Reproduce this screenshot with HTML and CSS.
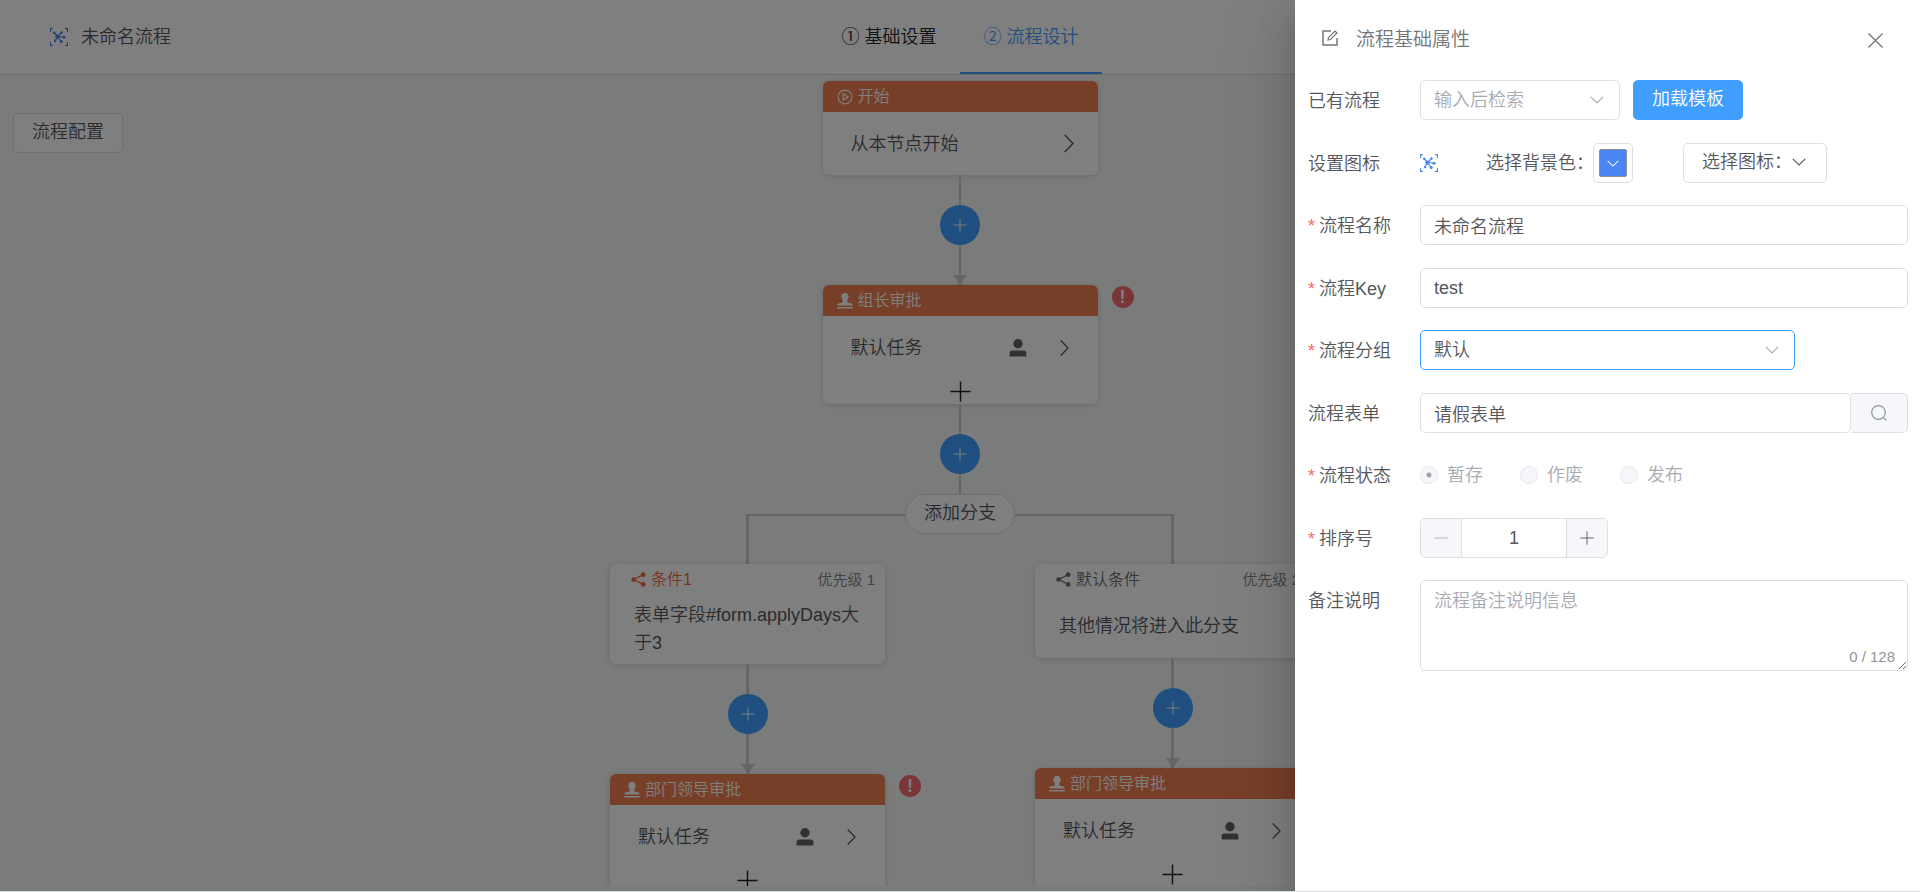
FILE: index.html
```html
<!DOCTYPE html>
<html lang="zh-CN">
<head>
  <meta charset="UTF-8">
  <meta name="viewport" content="width=device-width, initial-scale=1.0">
  <title>流程设计</title>
  <link rel="stylesheet" href="styles.css">
</head>
<body>
  <svg class="sprite" aria-hidden="true">
    <symbol id="i-flow" viewBox="0 0 18 18">
      <path d="M0 0h3L0 3zM18 0v3l-3-3zM0 18v-3l3 3zM18 18h-3l3-3z" fill="currentColor"/>
      <path d="M.5 4V.5H3M15 .5h2.500V4M17.500 14v3.500H15M3 17.500H.5V14" fill="none" stroke="currentColor"/>
      <path d="M4 4.500l3.500 4 4-4M7.500 8.500L14 9M7.500 8.500l3.500 5M7.500 8.500L5 13" fill="none" stroke="currentColor" stroke-width="1.200"/>
      <g fill="currentColor"><circle cx="4.200" cy="4.700" r="1.200"/><circle cx="11.500" cy="4.500" r="1.200"/><circle cx="14" cy="9.200" r="1.500"/><circle cx="11.200" cy="13.500" r="1.500"/><circle cx="5" cy="13" r="1.200"/><circle cx="7.500" cy="8.600" r="2.200"/></g>
    </symbol>
    <symbol id="i-play" viewBox="0 0 18 18">
      <g fill="none" stroke="currentColor" stroke-width="1.300"><circle cx="9" cy="9" r="7.800"/><path d="M7 5.500v7L12.500 9z"/></g>
    </symbol>
    <symbol id="i-stamp" viewBox="0 0 16 16">
      <path d="M8 0a3.800 3.800 0 0 1 3.600 3.900c0 1.500-1.400 2.600-1.400 4.300 0 1.300 1 1.800 2.600 1.800 1.700 0 3 .9 3 2.500H.2C.2 10.900 1.500 10 3.200 10c1.600 0 2.600-.5 2.600-1.800 0-1.700-1.400-2.800-1.400-4.300A3.800 3.800 0 0 1 8 0zM.2 14h15.600v1.500H.2z" fill="currentColor"/>
    </symbol>
    <symbol id="i-share" viewBox="0 0 16 16">
      <path d="M13 2.800L3 8l10 5.200" fill="none" stroke="currentColor" stroke-width="1.300"/>
      <g fill="currentColor"><circle cx="13" cy="2.800" r="2.500"/><circle cx="2.800" cy="8" r="2.500"/><circle cx="13" cy="13.200" r="2.500"/></g>
    </symbol>
    <symbol id="i-user" viewBox="0 0 18 18">
      <path d="M9 0a4.700 4.700 0 1 1 0 9.400A4.700 4.700 0 0 1 9 0zM.6 17.600v-3.400c0-1.600.9-2.600 2.500-2.600h11.800c1.600 0 2.500 1 2.500 2.600v3.400z" fill="currentColor"/>
    </symbol>
    <symbol id="i-right" viewBox="0 0 10 18">
      <path d="M.8.5L9 9 .8 17.500" fill="none" stroke="currentColor" stroke-width="1.400"/>
    </symbol>
    <symbol id="i-down" viewBox="0 0 14 8">
      <path d="M.8.8L7 7 13.200.8" fill="none" stroke="currentColor" stroke-width="1.200"/>
    </symbol>
    <symbol id="i-plus" viewBox="0 0 22 22">
      <path d="M11 .5v21M.5 11h21" fill="none" stroke="currentColor" stroke-width="1.500"/>
    </symbol>
    <symbol id="i-minus" viewBox="0 0 22 22">
      <path d="M.5 11h21" fill="none" stroke="currentColor" stroke-width="1.500"/>
    </symbol>
    <symbol id="i-edit" viewBox="0 0 16 16">
      <path d="M9 1H1v14h14V8" fill="none" stroke="currentColor" stroke-width="1.500"/>
      <path d="M6 10l.5-2.500 6.500-6.500 2 2-6.500 6.500z" fill="none" stroke="currentColor" stroke-width="1.200"/>
    </symbol>
    <symbol id="i-close" viewBox="0 0 16 16">
      <path d="M.5.5l15 15M15.500.5l-15 15" fill="none" stroke="currentColor" stroke-width="1.400"/>
    </symbol>
    <symbol id="i-search" viewBox="0 0 16 16">
      <circle cx="7.500" cy="7.500" r="6.800" fill="none" stroke="currentColor" stroke-width="1.200"/>
      <path d="M12.300 12.300l3 3" stroke="currentColor" stroke-width="1.200"/>
    </symbol>
  </svg>

  <div class="app">
    <header class="header">
      <div class="brand">
        <svg class="icon-flow"><use href="#i-flow"/></svg>
        <span>未命名流程</span>
      </div>
      <nav class="tabs">
        <a href="#base">① 基础设置</a>
        <a href="#design" class="active">② 流程设计</a>
      </nav>
    </header>

    <main class="canvas">
      <button class="btn config-btn">流程配置</button>

      <section class="node">
        <h3 class="node-title"><svg><use href="#i-play"/></svg>开始</h3>
        <div class="node-row">
          <span>从本节点开始</span>
          <svg class="arrow-lg"><use href="#i-right"/></svg>
        </div>
      </section>
      <div class="link link-arrow">
        <button class="add" aria-label="添加节点"><svg><use href="#i-plus"/></svg></button>
      </div>

      <section class="node">
        <h3 class="node-title"><svg><use href="#i-stamp"/></svg>组长审批</h3>
        <div class="node-row">
          <span>默认任务</span>
          <svg class="user"><use href="#i-user"/></svg>
          <svg class="arrow"><use href="#i-right"/></svg>
        </div>
        <div class="node-more"><svg><use href="#i-plus"/></svg></div>
        <span class="error">!</span>
      </section>
      <div class="link link-short">
        <button class="add" aria-label="添加节点"><svg><use href="#i-plus"/></svg></button>
      </div>

      <button class="btn branch-btn">添加分支</button>
      <div class="branches">
        <div class="branch">
          <section class="node">
            <div class="cond-title active">
              <svg><use href="#i-share"/></svg><span>条件1</span><small>优先级 1</small>
            </div>
            <p class="cond-body">表单字段#form.applyDays大于3</p>
          </section>
          <div class="link link-arrow">
            <button class="add" aria-label="添加节点"><svg><use href="#i-plus"/></svg></button>
          </div>
          <section class="node">
            <h3 class="node-title"><svg><use href="#i-stamp"/></svg>部门领导审批</h3>
            <div class="node-row">
              <span>默认任务</span>
              <svg class="user"><use href="#i-user"/></svg>
              <svg class="arrow"><use href="#i-right"/></svg>
            </div>
            <div class="node-more"><svg><use href="#i-plus"/></svg></div>
            <span class="error">!</span>
          </section>
        </div>

        <div class="branch">
          <section class="node">
            <div class="cond-title">
              <svg><use href="#i-share"/></svg><span>默认条件</span><small>优先级 2</small>
            </div>
            <p class="cond-body">其他情况将进入此分支</p>
          </section>
          <div class="link link-arrow">
            <button class="add" aria-label="添加节点"><svg><use href="#i-plus"/></svg></button>
          </div>
          <section class="node">
            <h3 class="node-title"><svg><use href="#i-stamp"/></svg>部门领导审批</h3>
            <div class="node-row">
              <span>默认任务</span>
              <svg class="user"><use href="#i-user"/></svg>
              <svg class="arrow"><use href="#i-right"/></svg>
            </div>
            <div class="node-more"><svg><use href="#i-plus"/></svg></div>
          </section>
        </div>
      </div>
    </main>

    <div class="overlay">
      <aside class="drawer">
        <header class="drawer-header">
          <svg class="edit"><use href="#i-edit"/></svg>
          <h2>流程基础属性</h2>
          <button class="close" aria-label="关闭"><svg><use href="#i-close"/></svg></button>
        </header>

        <form class="form">
          <div class="form-item">
            <label for="template">已有流程</label>
            <div class="field">
              <div class="select select-sm placeholder">
                <select id="template"><option>输入后检索</option></select>
                <svg><use href="#i-down"/></svg>
              </div>
              <button type="button" class="btn primary">加载模板</button>
            </div>
          </div>

          <div class="form-item">
            <span class="label">设置图标</span>
            <div class="field">
              <svg class="icon-flow"><use href="#i-flow"/></svg>
              <label class="color-label" for="color">选择背景色：</label>
              <button type="button" id="color" class="color" aria-label="选择背景色">
                <span class="swatch"><svg><use href="#i-down"/></svg></span>
              </button>
              <button type="button" class="btn icon-btn">选择图标：<svg><use href="#i-down"/></svg></button>
            </div>
          </div>

          <div class="form-item required">
            <label for="name">流程名称</label>
            <div class="field"><input type="text" id="name" value="未命名流程"></div>
          </div>

          <div class="form-item required">
            <label for="key">流程Key</label>
            <div class="field"><input type="text" id="key" value="test"></div>
          </div>

          <div class="form-item required">
            <label for="group">流程分组</label>
            <div class="field">
              <div class="select select-lg focus">
                <select id="group"><option>默认</option></select>
                <svg><use href="#i-down"/></svg>
              </div>
            </div>
          </div>

          <div class="form-item">
            <label for="form">流程表单</label>
            <div class="field">
              <input type="text" id="form" class="with-append" value="请假表单">
              <button type="button" class="append" aria-label="搜索"><svg><use href="#i-search"/></svg></button>
            </div>
          </div>

          <div class="form-item required">
            <span class="label">流程状态</span>
            <div class="field radios">
              <label><input type="radio" name="status" checked disabled>暂存</label>
              <label><input type="radio" name="status" disabled>作废</label>
              <label><input type="radio" name="status" disabled>发布</label>
            </div>
          </div>

          <div class="form-item required">
            <label for="sort">排序号</label>
            <div class="field">
              <div class="number">
                <button type="button" disabled aria-label="减少"><svg><use href="#i-minus"/></svg></button>
                <input type="text" id="sort" value="1">
                <button type="button" aria-label="增加"><svg><use href="#i-plus"/></svg></button>
              </div>
            </div>
          </div>

          <div class="form-item">
            <label for="remark">备注说明</label>
            <div class="field remark">
              <textarea id="remark" placeholder="流程备注说明信息" maxlength="128"></textarea>
              <span class="count">0 / 128</span>
            </div>
          </div>
        </form>
      </aside>
    </div>
  </div>
  <div class="bottom-line"></div>
</body>
</html>
```

FILE: styles.css
```css
* {
  box-sizing: border-box;
}

body {
  margin: 0;
  height: 100vh;
  display: flex;
  flex-direction: column;
  overflow: hidden;
  font-family: "Liberation Sans", "Noto Sans CJK SC", sans-serif;
  font-size: 18px;
  font-weight: 350;
  line-height: 28px;
  color: #55575b;
}

button, input, select, textarea {
  font: inherit;
  color: inherit;
}

button {
  padding: 0;
  cursor: pointer;
}

svg {
  display: block;
  flex: none;
}

h2, h3, p {
  margin: 0;
  font-weight: inherit;
}

.sprite {
  position: absolute;
  width: 0;
  height: 0;
}

.app {
  position: relative;
  flex: 1;
  min-height: 0;
  display: flex;
  flex-direction: column;
  background: #f5f8f6;
}

.bottom-line {
  height: 1px;
  background: #d3dde2;
}

/* header */
.header {
  display: grid;
  grid-template-columns: 1fr auto 1fr;
  flex: none;
  height: 75px;
  background: #fff;
  border-bottom: 1px solid #dcdcdc;
}

.brand {
  display: flex;
  align-items: center;
  gap: 13px;
  padding-left: 50px;
}

.icon-flow {
  width: 18px;
  height: 18px;
  color: #4a86f0;
}

.tabs {
  display: flex;
}

.tabs a {
  width: 142px;
  height: 74px;
  line-height: 74px;
  text-align: center;
  color: #222;
  text-decoration: none;
  border-bottom: 2px solid transparent;
}

.tabs a.active {
  color: #409eff;
  border-color: #409eff;
}

/* canvas */
.canvas {
  position: relative;
  flex: 1;
  min-height: 0;
  margin-bottom: 5px;
  padding-top: 6px;
  overflow: hidden;
  display: flex;
  flex-direction: column;
  align-items: center;
}

.canvas > * {
  flex: none;
}

.btn {
  height: 40px;
  padding: 0 18px 2px;
  background: #fff;
  border: 1px solid #dcdfe6;
  border-radius: 5px;
}

.config-btn {
  position: absolute;
  left: 13px;
  top: 38px;
}

.node {
  position: relative;
  width: 275px;
  background: #fff;
  border-radius: 6px;
  box-shadow: 0 1px 6px rgba(0, 0, 0, 0.15);
}

.node-title {
  display: flex;
  align-items: center;
  gap: 5px;
  height: 31px;
  padding: 1px 0 0 14px;
  font-size: 16px;
  color: #fff;
  background: #ee7f50;
  border-radius: 6px 6px 0 0;
}

.node-title svg {
  width: 16px;
  height: 16px;
}

.node-row {
  display: flex;
  align-items: center;
  height: 63px;
  padding: 0 24px 0 28px;
}

.node-row span {
  margin-right: auto;
}

.arrow-lg {
  width: 10px;
  height: 19px;
}

.user {
  width: 18px;
  height: 18px;
  margin-right: 33px;
  color: #606266;
}

.arrow {
  width: 9px;
  height: 16px;
  margin-right: 5px;
}

.node-more {
  height: 25px;
  padding-top: 2px;
  color: #222;
}

.node-more svg {
  width: 21px;
  height: 21px;
  margin: 0 auto;
}

.error {
  position: absolute;
  left: 289px;
  top: 1px;
  width: 22px;
  height: 22px;
  line-height: 22px;
  text-align: center;
  font-weight: 700;
  color: #fff;
  background: #f56c6c;
  border-radius: 50%;
}

.link {
  position: relative;
  display: flex;
  justify-content: center;
  height: 110px;
  padding-top: 30px;
  background: linear-gradient(#cacaca, #cacaca) center / 2px 100% no-repeat;
}

.branch .link {
  background-size: 3px 100%;
}

.link-short {
  height: 90px;
}

.link-arrow::after {
  content: "";
  position: absolute;
  left: 50%;
  bottom: 0;
  margin-left: -7px;
  border: 7px solid transparent;
  border-top: 10px solid #cacaca;
  border-bottom: 0;
}

.add {
  width: 40px;
  height: 40px;
  display: flex;
  align-items: center;
  justify-content: center;
  color: #fff;
  background: #409eff;
  border: 0;
  border-radius: 50%;
}

.add svg {
  width: 14px;
  height: 14px;
}

.branch-btn {
  position: relative;
  z-index: 1;
  margin-bottom: -20px;
  border-radius: 20px;
}

.branches {
  display: flex;
}

.branch {
  position: relative;
  width: 425px;
  padding-top: 50px;
  display: flex;
  flex-direction: column;
  align-items: center;
  background: linear-gradient(#cacaca, #cacaca) top center / 3px 60px no-repeat;
}

.branch::before {
  content: "";
  position: absolute;
  top: 0;
  left: 50%;
  right: 0;
  height: 2px;
  background: #cacaca;
}

.branch:last-child::before {
  left: 0;
  right: 50%;
}

.cond-title {
  display: flex;
  align-items: center;
  gap: 5px;
  height: 30px;
  padding: 1px 10px 0 21px;
  font-size: 16px;
  color: #6c6e72;
}

.cond-title.active {
  color: #ee6b3b;
}

.cond-title svg {
  width: 15px;
  height: 15px;
}

.cond-title small {
  margin-left: auto;
  font-size: 15px;
  color: #82848a;
}

.cond-body {
  display: flex;
  align-items: center;
  min-height: 64px;
  padding: 7px 24px;
}

/* drawer */
.overlay {
  position: absolute;
  inset: 0;
  z-index: 10;
  display: flex;
  justify-content: flex-end;
  overflow: hidden;
  background: rgba(0, 0, 0, 0.5);
}

.drawer {
  width: 625px;
  background: #fff;
  box-shadow: 0 20px 60px 20px rgba(0, 0, 0, 0.08), 0 15px 40px rgba(0, 0, 0, 0.12), 0 10px 20px -10px rgba(0, 0, 0, 0.16);
}

.drawer-header {
  display: flex;
  align-items: center;
  height: 80px;
  padding: 0 37px 0 27px;
  color: #72767b;
}

.drawer-header h2 {
  margin: 0 auto 0 18px;
  font-size: 19px;
}

.edit {
  width: 16px;
  height: 16px;
  margin-bottom: 4px;
}

.close {
  background: none;
  border: 0;
}

.close svg {
  width: 15px;
  height: 15px;
}

.form {
  padding: 0 12px 0 13px;
}

.form-item {
  display: flex;
  margin-bottom: 23px;
}

.form-item:nth-child(even) {
  margin-bottom: 22px;
}

.form-item > label,
.form-item > .label {
  width: 112px;
  height: 40px;
  line-height: 42px;
}

.required > label::before,
.required > .label::before {
  content: "*";
  margin-right: 4px;
  color: #f56c6c;
}

.field {
  flex: 1;
  min-width: 0;
  min-height: 40px;
  display: flex;
  align-items: center;
}

.field input[type="text"],
.field select,
.field textarea {
  width: 100%;
  height: 40px;
  padding: 0 13px;
  background: #fff;
  border: 1px solid #dcdfe6;
  border-radius: 5px;
  outline: 0;
}

.select {
  position: relative;
}

.select-sm {
  width: 200px;
  margin-right: 13px;
}

.select-lg {
  width: 375px;
}

.field select {
  appearance: none;
}

.field .placeholder select {
  color: #a8abb2;
}

.field .focus select {
  border-color: #409eff;
}

.select svg {
  position: absolute;
  right: 16px;
  top: 16px;
  width: 14px;
  height: 8px;
  color: #a8abb2;
  pointer-events: none;
}

.primary {
  color: #fff;
  background: #409eff;
  border-color: #409eff;
}

.color-label {
  width: 107px;
  margin-left: 48px;
  line-height: 32px;
  white-space: nowrap;
}

.color {
  width: 40px;
  height: 40px;
  padding: 5px;
  background: #fff;
  border: 1px solid #dcdfe6;
  border-radius: 5px;
}

.swatch {
  display: flex;
  align-items: center;
  justify-content: center;
  height: 28px;
  color: #fff;
  background: #4a86f5;
  border: 1px solid #8c8f96;
  border-radius: 2px;
}

.swatch svg {
  width: 12px;
  height: 7px;
}

.icon-btn {
  display: flex;
  align-items: center;
  width: 144px;
  margin-left: 50px;
}

.icon-btn svg {
  width: 14px;
  height: 8px;
}

.field .with-append {
  flex: 1;
  min-width: 0;
  border-radius: 5px 0 0 5px;
}

.append {
  display: flex;
  align-items: center;
  justify-content: center;
  width: 57px;
  height: 40px;
  color: #909399;
  background: #f5f7fa;
  border: 1px solid #dcdfe6;
  border-left: 0;
  border-radius: 0 5px 5px 0;
}

.append svg {
  width: 16px;
  height: 16px;
}

.radios {
  gap: 37px;
}

.radios label {
  display: flex;
  align-items: center;
  gap: 9px;
  color: #a8abb2;
}

.radios input {
  appearance: none;
  width: 18px;
  height: 18px;
  margin: 0;
  background: #f5f7fa;
  border: 1px solid #e4e7ed;
  border-radius: 50%;
}

.radios input:checked {
  background: radial-gradient(circle, #a0a3aa 2px, #f5f7fa 3px);
}

.number {
  display: flex;
  width: 188px;
  height: 40px;
  border: 1px solid #dcdfe6;
  border-radius: 5px;
  overflow: hidden;
}

.number button {
  display: flex;
  align-items: center;
  justify-content: center;
  flex: none;
  width: 40px;
  color: #606266;
  background: #f5f7fa;
  border: 0;
}

.number button:disabled {
  color: #b0b3b9;
}

.number svg {
  width: 14px;
  height: 14px;
}

.field .number input {
  height: 38px;
  min-width: 0;
  text-align: center;
  border-width: 0 1px;
  border-radius: 0;
}

.remark {
  position: relative;
}

.field textarea {
  display: block;
  height: 91px;
  padding: 6px 13px;
  resize: vertical;
}

textarea::placeholder {
  color: #a8abb2;
}

.count {
  position: absolute;
  right: 13px;
  bottom: 5px;
  font-size: 15px;
  line-height: 18px;
  color: #909399;
}
```
